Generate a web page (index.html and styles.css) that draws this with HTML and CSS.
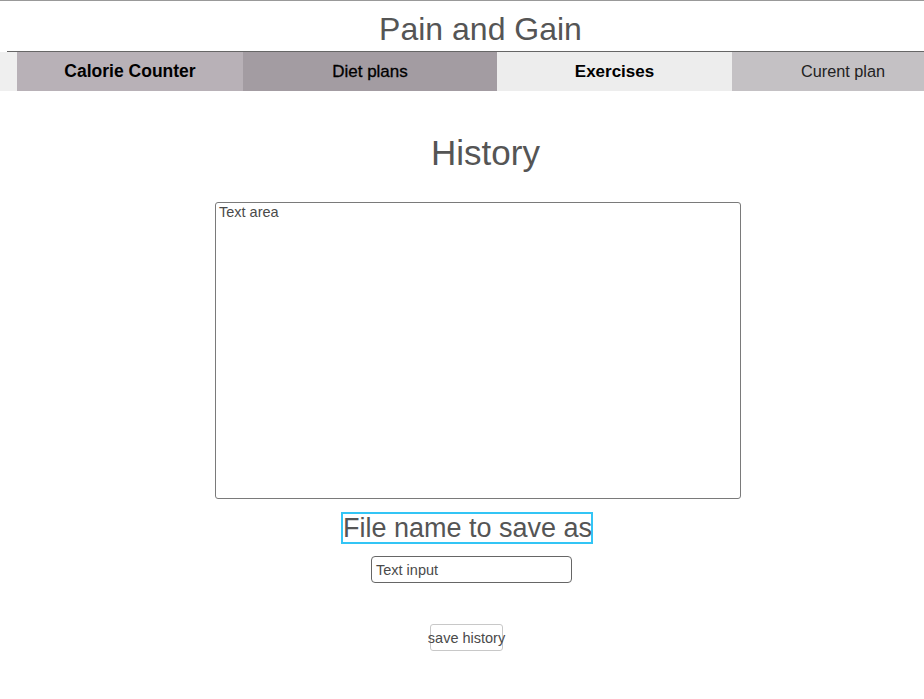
FILE: index.html
```html
<!DOCTYPE html>
<html>
	<head>
		<meta charset="UTF-8">
		<title>Pain and Gain</title>
		<link rel="stylesheet" href="styles.css">
	</head>
	<body>
		<div class="page">
			<h1 class="title">Pain and Gain</h1>
			<div class="rule"></div>
			<div class="nav">
				<div class="navpad"></div>
				<div class="navitem calorie">Calorie Counter</div>
				<div class="navitem diet">Diet plans</div>
				<div class="navitem exercises">Exercises</div>
				<div class="navitem current">Curent plan</div>
			</div>
			<div class="content">
				<h2 class="heading">History</h2>
				<div class="textarea">Text area</div>
				<div class="filename">File name to save as</div>
				<div class="textinput">Text input</div>
				<div class="button">save history</div>
			</div>
		</div>
	</body>
</html>
```

FILE: styles.css
```css
* {
	margin: 0;
	padding: 0;
	box-sizing: border-box;
}
body {
	font-family: "Liberation Sans", Arial, sans-serif;
	background: #fff;
	color: #555;
}
.page {
	border-top: 1px solid #999;
	overflow: hidden;
}
.title {
	height: 50px;
	padding-top: 10px;
	padding-left: 37px;
	text-align: center;
	font-size: 32px;
	font-weight: normal;
	line-height: 36px;
	color: #555;
}
.rule {
	height: 1px;
	margin-left: 7px;
	background: #666;
}
.nav {
	display: flex;
	height: 39px;
	overflow: hidden;
}
.navpad {
	flex: 0 0 17px;
	background: #efefef;
}
.navitem {
	display: flex;
	align-items: center;
	justify-content: center;
	flex-shrink: 0;
	color: #000;
	white-space: nowrap;
}
.calorie {
	width: 226px;
	background: #b8b1b7;
	font-size: 17.5px;
	font-weight: bold;
}
.diet {
	width: 254px;
	background: #a39ca2;
	font-size: 17px;
	-webkit-text-stroke: 0.3px #000;
}
.exercises {
	width: 235px;
	background: #ededed;
	font-size: 17px;
	font-weight: bold;
}
.current {
	width: 222px;
	background: #c4c1c4;
	font-size: 16.3px;
	color: #222;
}
.content {
	display: flex;
	flex-direction: column;
	align-items: center;
}
.heading {
	margin-top: 42px;
	margin-left: 47px;
	font-size: 35px;
	font-weight: normal;
	line-height: 40px;
	color: #555;
}
.textarea {
	width: 526px;
	height: 297px;
	margin-top: 29px;
	margin-left: 32px;
	padding: 1px 3px;
	border: 1px solid #7a7a7a;
	border-radius: 3px;
	font-size: 14.5px;
	line-height: 16px;
	color: #4a4a4a;
}
.filename {
	width: 252px;
	height: 32px;
	margin-top: 13px;
	margin-left: 10px;
	border: 2px solid #33c5f5;
	font-size: 27px;
	line-height: 28px;
	text-align: center;
	white-space: nowrap;
	color: #555;
}
.textinput {
	width: 201px;
	height: 27px;
	margin-top: 12px;
	margin-left: 19px;
	padding-left: 4px;
	border: 1px solid #666;
	border-radius: 4px;
	font-size: 14.5px;
	line-height: 26px;
	color: #4a4a4a;
}
.button {
	display: flex;
	justify-content: center;
	align-items: center;
	width: 73px;
	height: 27px;
	margin-top: 41px;
	margin-left: 9px;
	border: 1px solid #c8c8c8;
	border-radius: 3px;
	font-size: 14.5px;
	white-space: nowrap;
	color: #4a4a4a;
}
```
